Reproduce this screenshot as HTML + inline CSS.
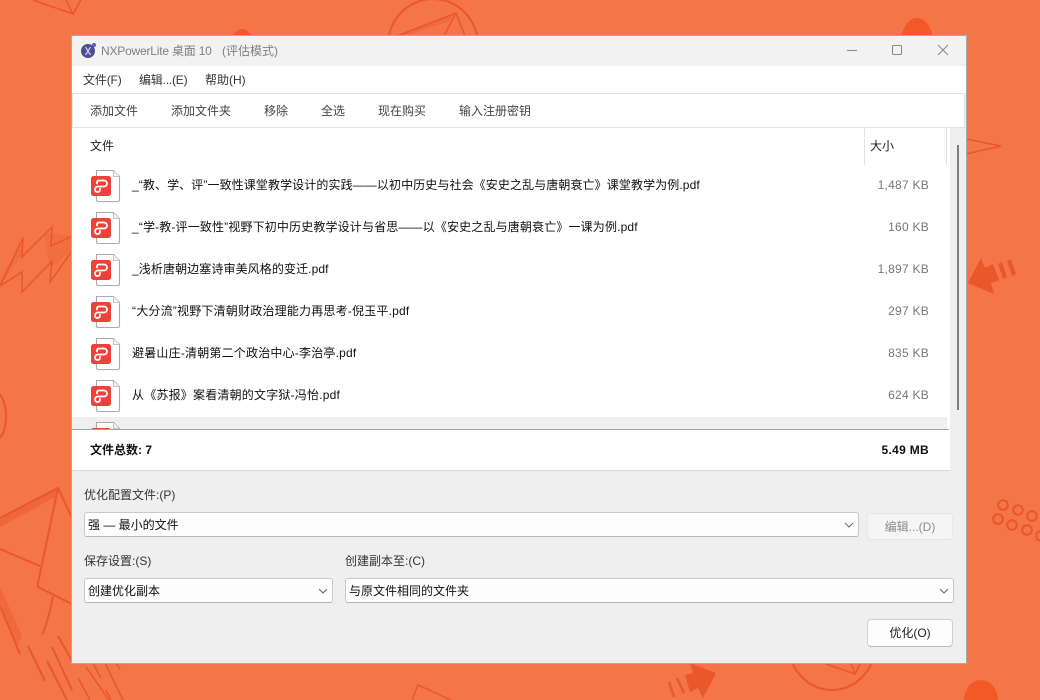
<!DOCTYPE html>
<html><head><meta charset="utf-8">
<style>
html,body{margin:0;padding:0}
body{width:1040px;height:700px;position:relative;overflow:hidden;background:#f47548;font-family:"Liberation Sans","Noto Sans CJK SC",sans-serif;font-size:12px;color:#111}
.a{position:absolute;white-space:nowrap;line-height:16px}
.b{position:absolute}
.sel{position:absolute;box-sizing:border-box;background:#fdfdfd;border:1px solid #c8c8c8;border-bottom-color:#b4b4b4;border-radius:3px}
.sel svg{position:absolute;right:3px;top:6px}
.btn{position:absolute;box-sizing:border-box;border-radius:4px;text-align:center;line-height:26px}
.ic{position:absolute;left:91px;width:30px;height:34px}
.r{right:111px;color:#777;text-align:right;letter-spacing:.25px}
</style></head><body>
<svg class="b" style="left:0;top:0" width="1040" height="700" fill="none" stroke="#e9572a" stroke-width="1.5">
<!-- top -->
<path d="M33 0L73 14L81 0M66 0L73 14" stroke-width="1.5"/>
<path d="M33 0L71 12L69 13L36 0Z" fill="#e9572a" fill-opacity=".4" stroke="none"/>
<ellipse cx="433" cy="45" rx="45" ry="46" stroke-width="2"/>
<path d="M397 36L456 13L444 36M456 13L465 36"/>
<path d="M397 36L453 15L450 21L404 36Z" fill="#e9572a" fill-opacity=".35" stroke="none"/>
<ellipse cx="242" cy="55" rx="14" ry="26" fill="#f15a26" stroke="none"/>
<ellipse cx="917" cy="46" rx="17" ry="28" fill="#f15a26" stroke="none"/>
<!-- left -->
<path d="M0 286L23 238L22 257L52 227L51 246L72 236M0 286L22 272L22 292L52 261L50 282L72 251"/>
<path d="M44 233L72 236L72 251L50 268Z" fill="#e9572a" fill-opacity=".22" stroke="none"/>
<path d="M0 279L23 240L22 255L4 280Z" fill="#e9572a" fill-opacity=".22" stroke="none"/>
<path d="M0 394C4 400 6 408 6 416C6 425 4 433 0 438" stroke-width="2"/>
<path d="M0 518L58 488L72 518M58 488L38 583C37 586 38 587 40 588L72 604M0 549L40 566M53 596C50 612 47 624 42 635M28 646L45 681M47 661L67 700M52 647L72 690M58 636L72 661M0 606L20 654" stroke-width="2"/>
<path d="M0 518L58 488L55 497L0 527Z" fill="#e9572a" fill-opacity=".5" stroke="none"/>
<path d="M0 587L22 636L17 646L0 603Z" fill="#e9572a" fill-opacity=".4" stroke="none"/>
<!-- right -->
<path d="M966 139L1001 146L966 154"/>
<path d="M968 283L981 258L985 268L993 264L999 280L991 283L994 294Z" fill="#e9572a" stroke="none"/>
<path d="M998 264L1002 262L1007 277L1003 279ZM1007 261L1011 259L1016 274L1012 276Z" fill="#e9572a" stroke="none"/>
<g stroke-width="2">
<circle cx="1003" cy="505" r="4.8"/><circle cx="1018" cy="510" r="4.8"/><circle cx="1032" cy="516" r="4.8"/>
<circle cx="998" cy="519" r="4.8"/><circle cx="1012" cy="525" r="4.8"/><circle cx="1027" cy="530" r="4.8"/><circle cx="1041" cy="536" r="4.8"/>
</g>
<ellipse cx="981" cy="700" rx="17" ry="20" fill="#f15a26" stroke="none"/>
<!-- bottom -->
<path d="M93 663L101 678M78 678L90 700M86 667L109 700M105 663L123 700M116 663L120 669M106 690L111 700" stroke-width="1.5"/>
<path d="M412 700L418 685L451 700" stroke-width="1.5"/>
<path d="M690 663L716 673L703 698L698 688L690 692L685 675L693 673Z" fill="#e9572a" stroke="none"/>
<path d="M669 682L674 697M677 678L684 693" stroke-width="2.5"/>
<ellipse cx="832" cy="645" rx="43" ry="45" stroke-width="2"/>
<path d="M826 664L855 674L860 664M851 664L855 674"/>
</svg>

<!-- window -->
<div class="b" style="left:71px;top:35px;width:896px;height:629px;box-sizing:border-box;border:1px solid #a9aaa9;background:#efefef"></div>
<div class="b" style="left:72px;top:36px;width:894px;height:30px;background:#f2f2f2"></div>
<div class="b" style="left:72px;top:66px;width:894px;height:27px;background:#fff"></div>
<div class="b" style="left:72px;top:93px;width:893px;height:35px;box-sizing:border-box;background:#fff;border:1px solid #e2e2e2"></div>
<div class="b" style="left:72px;top:128px;width:878px;height:343px;background:#fff"></div>
<div class="b" style="left:72px;top:417px;width:875px;height:12px;background:#efefef"></div>
<div class="b" style="left:72px;top:429px;width:877px;height:1px;background:#a3a3a3"></div>
<div class="b" style="left:72px;top:430px;width:878px;height:40px;background:#fff"></div>
<div class="b" style="left:72px;top:470px;width:878px;height:1px;background:#d9d9d9"></div>
<div class="b" style="left:864px;top:128px;width:1px;height:37px;background:#e2e2e2"></div>
<div class="b" style="left:946px;top:128px;width:1px;height:37px;background:#e2e2e2"></div>
<div class="b" style="left:957px;top:145px;width:2px;height:265px;background:#7e7e7e"></div>

<!-- title bar -->
<svg class="b" style="left:79px;top:41px" width="18" height="18"><circle cx="9" cy="10" r="7" fill="#4b4f8f"/><circle cx="15" cy="4" r="2" fill="#5a5f9f"/><path d="M6.5 6L11.5 14M11.5 6L6.5 14" stroke="#c8cbe6" stroke-width="1.3"/></svg>
<div class="a" style="left:101px;top:43px;color:#7f7f7f;letter-spacing:-.2px">NXPowerLite 桌面 10</div>
<div class="a" style="left:222px;top:43px;color:#7f7f7f">(评估模式)</div>
<svg class="b" style="left:840px;top:40px" width="120" height="22" fill="none" stroke="#8c8c8c" stroke-width="1.1"><path d="M7 10.5H17"/><rect x="52.5" y="5.5" width="9" height="9" rx="1"/><path d="M98 5L108 15M108 5L98 15"/></svg>

<!-- menu -->
<div class="a" style="left:83px;top:72px;color:#333;letter-spacing:-.15px">文件(F)</div>
<div class="a" style="left:139px;top:72px;color:#333;letter-spacing:-.2px">编辑...(E)</div>
<div class="a" style="left:205px;top:72px;color:#333">帮助(H)</div>

<!-- toolbar -->
<div class="a" style="left:90px;top:103px;color:#444">添加文件</div>
<div class="a" style="left:171px;top:103px;color:#444">添加文件夹</div>
<div class="a" style="left:264px;top:103px;color:#444">移除</div>
<div class="a" style="left:321px;top:103px;color:#444">全选</div>
<div class="a" style="left:378px;top:103px;color:#444">现在购买</div>
<div class="a" style="left:459px;top:103px;color:#444">输入注册密钥</div>

<!-- header -->
<div class="a" style="left:90px;top:138px;color:#222">文件</div>
<div class="a" style="left:870px;top:138px;color:#222">大小</div>

<!-- icons -->
<svg width="0" height="0" style="position:absolute"><defs>
<symbol id="pdf" viewBox="0 0 30 34">
<path d="M5.5 .5H22.5L28.5 6.5V30a1.5 1.5 0 0 1-1.5 1.5H7A1.5 1.5 0 0 1 5.5 30Z" fill="#fff" stroke="#a9a9b2" stroke-width="1.1"/>
<path d="M22.5 .5V6.5H28.5" fill="#f2f2f2" stroke="#c4c4ca" stroke-width="1"/>
<rect x="0" y="6" width="20" height="20" rx="2.5" fill="#ee4139"/>
<path d="M6 13.5V12.5C6 11 7 10.5 8 10.5H13C15 10.5 16 12 16 13.5C16 15.5 14.5 16.5 13 16.5H7C5 16.5 4 18 4 19.5C4 21 5 22 6.5 22C8 22 9 21 9 19.5V18.5" fill="none" stroke="#fff" stroke-width="1.8" stroke-linecap="round"/>
</symbol></defs></svg>
<svg class="ic" style="top:170px"><use href="#pdf"/></svg>
<svg class="ic" style="top:212px"><use href="#pdf"/></svg>
<svg class="ic" style="top:254px"><use href="#pdf"/></svg>
<svg class="ic" style="top:296px"><use href="#pdf"/></svg>
<svg class="ic" style="top:338px"><use href="#pdf"/></svg>
<svg class="ic" style="top:380px"><use href="#pdf"/></svg>
<div class="b" style="left:91px;top:422px;width:30px;height:7px;overflow:hidden"><svg style="position:absolute;left:0;top:0" width="30" height="34"><use href="#pdf"/></svg></div>

<!-- rows -->
<div class="a" style="left:132px;top:177px;letter-spacing:.1px">_“教、学、评”一致性课堂教学设计的实践——以初中历史与社会《安史之乱与唐朝衰亡》课堂教学为例.pdf</div>
<div class="a r" style="top:177px">1,487 KB</div>
<div class="a" style="left:132px;top:219px;letter-spacing:.15px">_“学-教-评一致性”视野下初中历史教学设计与省思——以《安史之乱与唐朝衰亡》一课为例.pdf</div>
<div class="a r" style="top:219px">160 KB</div>
<div class="a" style="left:132px;top:261px;letter-spacing:.1px">_浅析唐朝边塞诗审美风格的变迁.pdf</div>
<div class="a r" style="top:261px">1,897 KB</div>
<div class="a" style="left:132px;top:303px;letter-spacing:.2px">“大分流”视野下清朝财政治理能力再思考-倪玉平.pdf</div>
<div class="a r" style="top:303px">297 KB</div>
<div class="a" style="left:132px;top:345px;letter-spacing:.2px">避暑山庄-清朝第二个政治中心-李治亭.pdf</div>
<div class="a r" style="top:345px">835 KB</div>
<div class="a" style="left:132px;top:387px;letter-spacing:.2px">从《苏报》案看清朝的文字狱-冯怡.pdf</div>
<div class="a r" style="top:387px">624 KB</div>

<!-- summary -->
<div class="a" style="left:90px;top:442px;font-weight:bold;color:#111">文件总数: 7</div>
<div class="a" style="right:111px;top:442px;font-weight:bold;color:#111;letter-spacing:.3px">5.49 MB</div>

<!-- form -->
<div class="a" style="left:84px;top:487px;color:#333">优化配置文件:(P)</div>
<div class="sel" style="left:84px;top:512px;width:775px;height:25px;padding:4px 0 0 3px;line-height:16px">强 — 最小的文件<svg width="12" height="12" fill="none" stroke="#666" stroke-width="1"><path d="M2 4L6 8L10 4"/></svg></div>
<div class="btn" style="left:867px;top:513px;width:86px;height:27px;background:#f5f5f5;border:1px solid #e6e6e6;color:#8c8c8c">编辑...(D)</div>

<div class="a" style="left:84px;top:553px;color:#333">保存设置:(S)</div>
<div class="sel" style="left:84px;top:578px;width:249px;height:25px;padding:4px 0 0 3px;line-height:16px">创建优化副本<svg width="12" height="12" fill="none" stroke="#666" stroke-width="1"><path d="M2 4L6 8L10 4"/></svg></div>
<div class="a" style="left:345px;top:553px;color:#333">创建副本至:(C)</div>
<div class="sel" style="left:345px;top:578px;width:609px;height:25px;padding:4px 0 0 3px;line-height:16px">与原文件相同的文件夹<svg width="12" height="12" fill="none" stroke="#666" stroke-width="1"><path d="M2 4L6 8L10 4"/></svg></div>
<div class="btn" style="left:867px;top:619px;width:86px;height:28px;background:#fdfdfd;border:1px solid #d0d0d0;border-bottom-color:#b8b8b8;color:#222">优化(O)</div>
</body></html>
